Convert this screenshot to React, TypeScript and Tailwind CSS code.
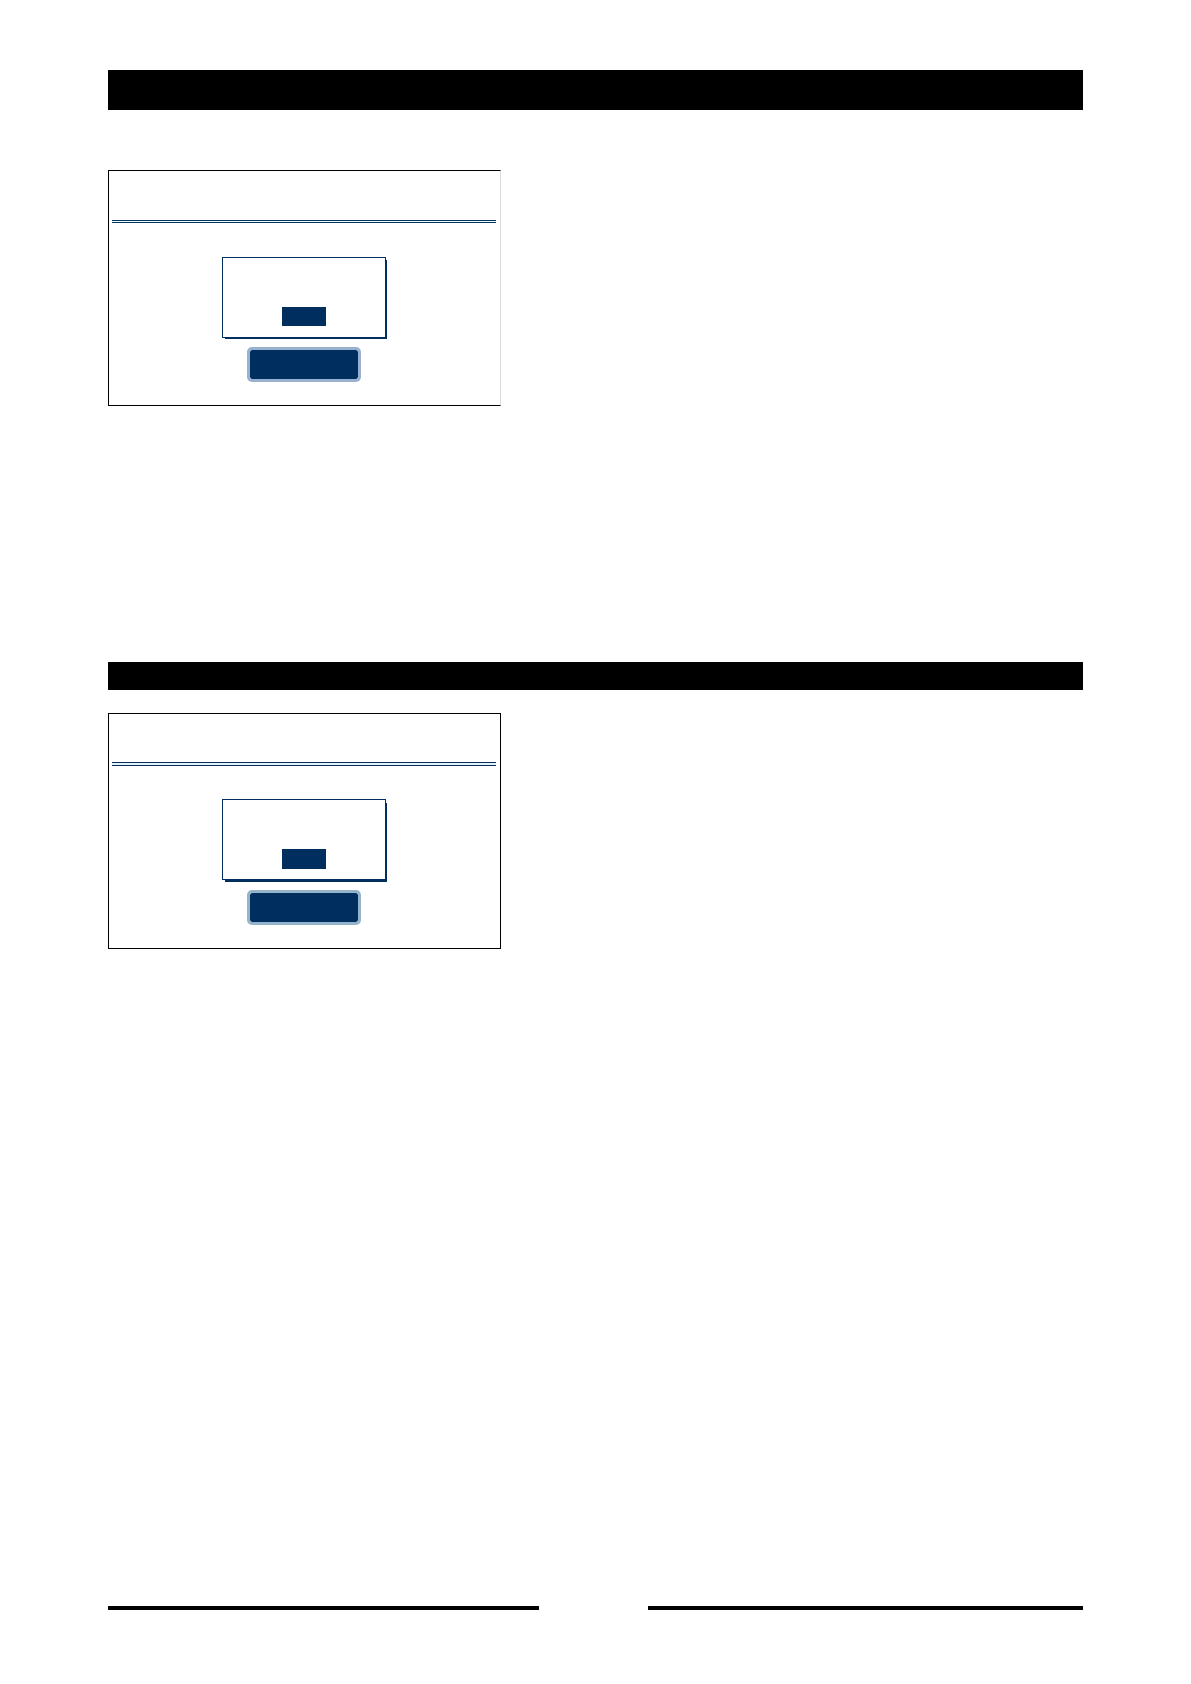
import clsx from 'clsx';

type ScreenProps = {
  label: string;
  variant: 'first' | 'second';
};

function Screen({ label, variant }: ScreenProps) {
  const second = variant === 'second';

  return (
    <section
      aria-label={label}
      className={clsx(
        'flex h-[236px] w-[393px] max-w-full flex-col items-center border border-black bg-white pr-1 pl-[3px]',
        second ? 'pt-12' : 'border-r-[#dcdcdc] pt-[49px]',
      )}
    >
      {/* Title rule */}
      <div
        className={clsx(
          'w-full shrink-0 border-y',
          second ? 'h-1 border-[#0b2a55] bg-[#dff3ff]' : 'h-[3px] border-[#05345c] bg-[#e6ffff]',
        )}
      />

      {/* Message box */}
      <div
        className={clsx(
          'flex h-[81px] w-[164px] shrink-0 justify-center border border-[#002f5f] bg-white pt-[49px]',
          second
            ? 'mt-[33px] shadow-[2px_3px_0_-1px_#002f5f]'
            : 'mt-[34px] shadow-[2px_2px_0_-1px_#002f5f]',
        )}
      >
        <div className={clsx('w-11 bg-[#002f5f]', second ? 'h-5' : 'h-[19px]')} />
      </div>

      <button
        type="button"
        aria-label="OK"
        className={clsx(
          'h-[35px] w-[114px] shrink-0 rounded-[5px] border-3 bg-[#002f5f] bg-clip-padding',
          second ? 'mt-2.5 border-[#94b4cb]' : 'mt-[9px] border-[#98b1cf]',
        )}
      />
    </section>
  );
}

export default function App() {
  return (
    <div className="flex min-h-screen flex-col bg-white px-[108px] pt-[70px] pb-[74px] font-['Liberation_Sans',sans-serif]">
      <header className="h-10 bg-black" />

      <main className="flex flex-col pt-[60px] pb-10">
        <Screen label="Screen 1" variant="first" />
        <div className="mt-64 mb-[23px] h-7 bg-black" />
        <Screen label="Screen 2" variant="second" />
      </main>

      {/* Footer rule, split around the page number */}
      <footer className="mt-auto grid grid-cols-[431fr_109px_435fr]">
        <div className="h-1 bg-black" />
        <div />
        <div className="h-1 bg-black" />
      </footer>
    </div>
  );
}
